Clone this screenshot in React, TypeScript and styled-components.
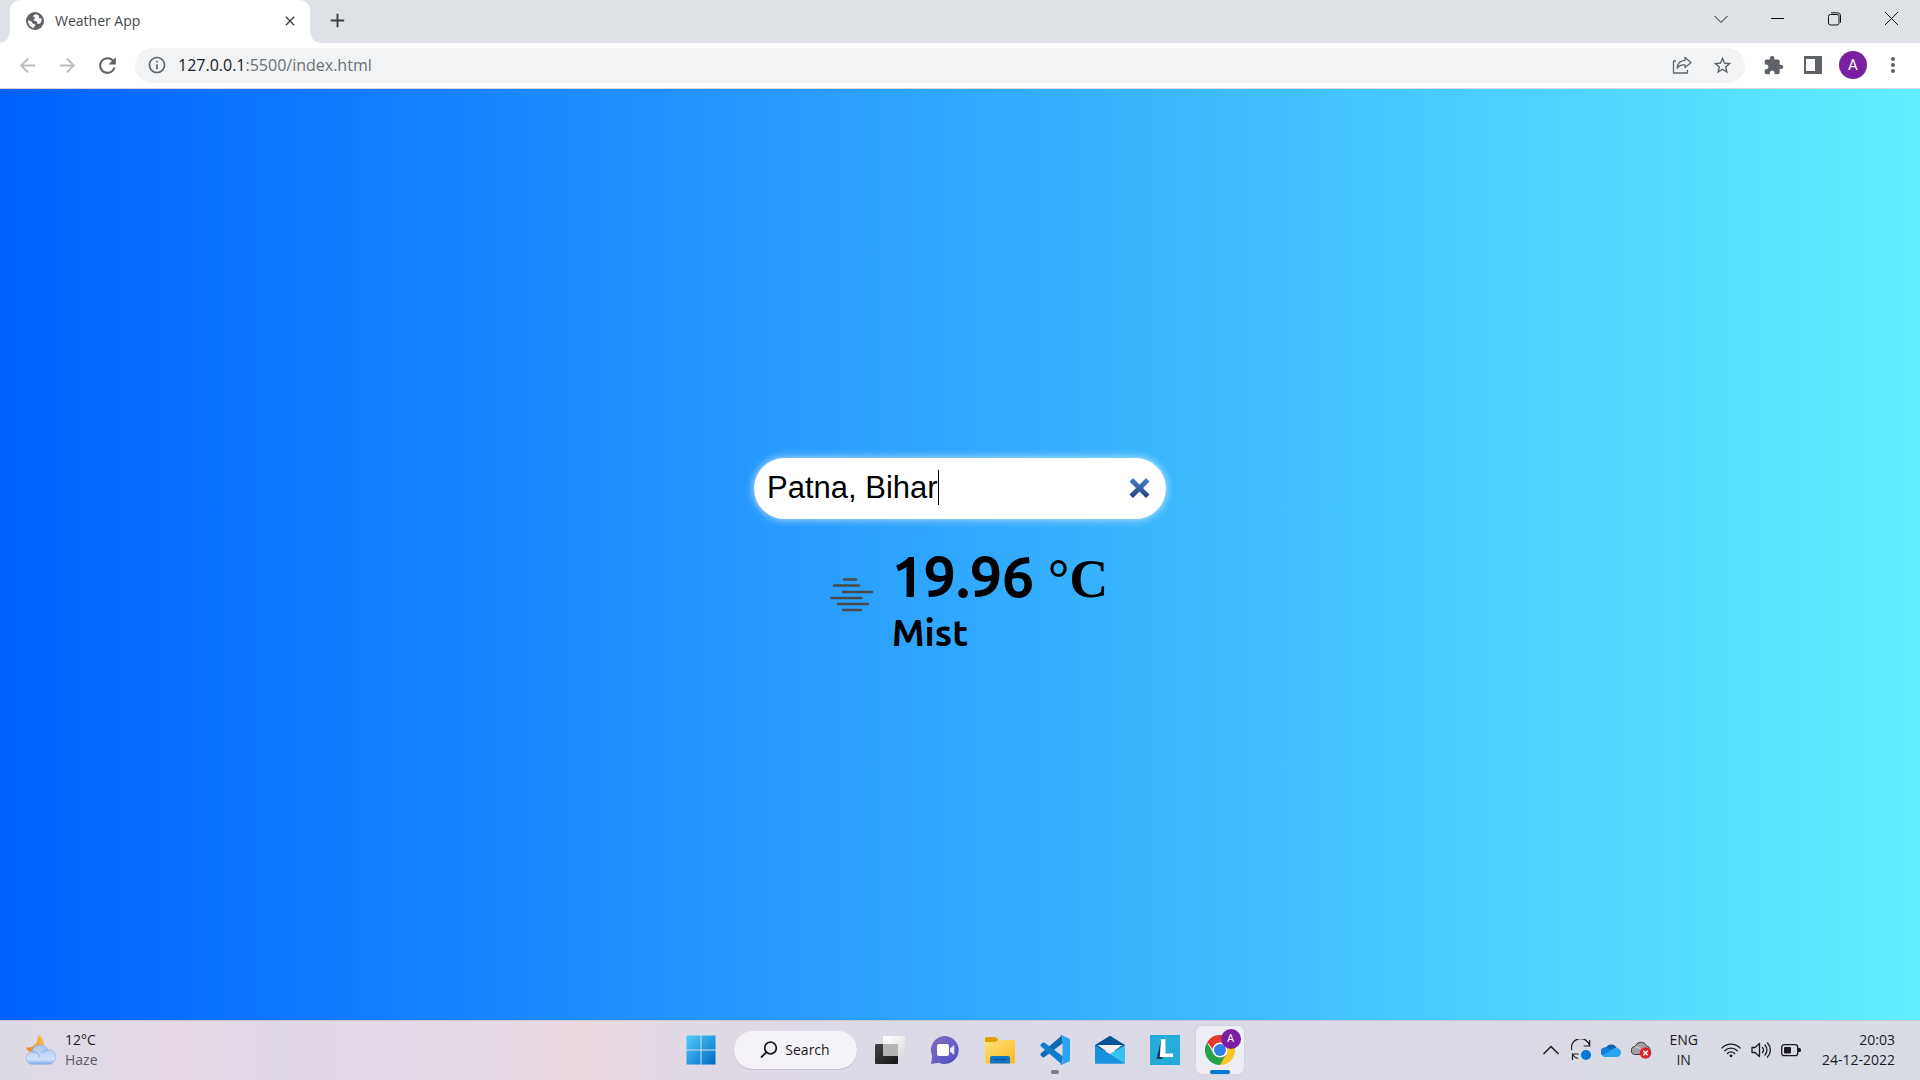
import React, { useState } from 'react';
import styled, { createGlobalStyle, css } from 'styled-components';
import {
  MdArrowBack,
  MdArrowForward,
  MdRefresh,
  MdInfoOutline,
  MdStarBorder,
  MdExtension,
  MdMoreVert,
  MdClose,
  MdAdd,
} from 'react-icons/md';

const UI_FONT = '"Segoe UI", "Open Sans", "Noto Sans", sans-serif';

const GlobalStyle = createGlobalStyle`
  *, *::before, *::after { box-sizing: border-box; }
  body { margin: 0; }
  button, input { font: inherit; color: inherit; }
  button { border: 0; padding: 0; background: none; cursor: pointer; }
  svg { display: block; flex: none; }
`;

const Screen = styled.div`
  min-height: 100vh;
  display: flex;
  flex-direction: column;
  font-family: ${UI_FONT};
  font-size: 14px;
  line-height: 20px;
  color: #1c1c1e;
`;

/* ---------- browser chrome ---------- */

const TabStrip = styled.div`
  display: flex;
  height: 43px;
  padding-left: 10px;
  background: #dee1e6;
`;

const Tab = styled.div`
  position: relative;
  display: flex;
  align-items: center;
  width: 300px;
  padding: 0 12px 2px 16px;
  border-radius: 10px 10px 0 0;
  background: #fff;
  color: #45474a;

  &::before,
  &::after {
    content: '';
    position: absolute;
    bottom: 0;
    width: 10px;
    height: 10px;
  }
  &::before {
    right: 100%;
    background: radial-gradient(circle at 0 0, transparent 9px, #fff 10px);
  }
  &::after {
    left: 100%;
    background: radial-gradient(circle at 100% 0, transparent 9px, #fff 10px);
  }
`;

const TabTitle = styled.span`
  flex: 1;
  margin-left: 11px;
`;

const IconButton = styled.button<{ $w?: number; $h?: number; $color?: string }>`
  display: flex;
  align-items: center;
  justify-content: center;
  flex: none;
  width: ${(p) => p.$w ?? 40}px;
  height: ${(p) => p.$h ?? 35}px;
  color: ${(p) => p.$color ?? '#5f6368'};
`;

const WindowControls = styled.div`
  display: flex;
  margin-left: auto;
`;

const Toolbar = styled.div`
  display: flex;
  align-items: center;
  height: 46px;
  padding: 0 7px 1px;
  border-bottom: 1px solid #d5d9dd;
  background: #fff;
`;

const AddressBar = styled.div`
  display: flex;
  align-items: center;
  flex: 1;
  height: 35px;
  margin: 0 8px;
  padding: 0 3px 0 12px;
  border-radius: 18px;
  background: #f1f3f4;
`;

const Url = styled.a`
  flex: 1;
  margin-left: 11px;
  font-size: 16px;
  line-height: 24px;
  color: #6b6f74;
  text-decoration: none;
`;

const Host = styled.span`
  color: #202124;
`;

const Avatar = styled.span`
  display: flex;
  align-items: center;
  justify-content: center;
  width: 28px;
  height: 28px;
  border-radius: 50%;
  background: #7b1fa2;
  color: #fff;
  font-family: Roboto, sans-serif;
  font-size: 15px;
`;

/* ---------- weather page ---------- */

const Page = styled.main`
  flex: 1;
  display: flex;
  flex-direction: column;
  align-items: center;
  justify-content: center;
  gap: 23px;
  padding-top: 1px;
  background: linear-gradient(90deg, #0061ff 0%, #60efff 100%);
  color: #000;
`;

const SearchField = styled.label`
  position: relative;
  display: flex;
  align-items: center;
  width: 412px;
  height: 61px;
  padding: 0 15px 0 13px;
  border-radius: 31px;
  background: #fff;
  box-shadow: 0 0 8px rgba(255, 255, 255, 0.75);
`;

const CityInput = styled.input`
  flex: 1;
  min-width: 0;
  padding: 0;
  border: 0;
  outline: 0;
  background: none;
  caret-color: transparent;
  font-family: Arial, "Liberation Sans", sans-serif;
  font-size: 31px;
  line-height: 36px;
`;

const Caret = styled.span`
  position: absolute;
  left: 184px;
  top: 12px;
  width: 1px;
  height: 35px;
  background: #000;
`;

const Result = styled.section`
  display: flex;
  align-items: center;
`;

const Condition = styled.div`
  display: flex;
  justify-content: center;
  width: 80px;
  padding-bottom: 4px;
`;

const Reading = styled.div`
  font-family: Ubuntu, "Noto Sans", sans-serif;
  font-weight: 700;
`;

const Temperature = styled.h1`
  margin: 0;
  font-size: 57px;
  line-height: 68px;
`;

const Unit = styled.span`
  font-family: "Liberation Serif", serif;
  font-size: 54px;
`;

const Description = styled.h2`
  margin: 0;
  font-size: 37px;
  line-height: 40px;
`;

/* ---------- taskbar ---------- */

const Taskbar = styled.footer`
  display: grid;
  grid-template-columns: 1fr auto 1fr;
  align-items: center;
  height: 60px;
  padding: 0 25px;
  box-shadow: inset 0 1px #c9c8d6;
  background: linear-gradient(
    90deg,
    #dcdbe6 0%,
    #e7d9e7 9%,
    #e1d8e7 14%,
    #e4d8e6 25%,
    #ebd8df 30%,
    #e0d9e6 36%,
    #dddae7 47%,
    #dadae6 62%,
    #d9dbe4 100%
  );
`;

const WeatherWidget = styled.button`
  display: flex;
  align-items: center;
  gap: 9px;
  text-align: left;
`;

const Lines = styled.span<{ $align?: string }>`
  display: flex;
  flex-direction: column;
  text-align: ${(p) => p.$align ?? 'left'};
`;

const Muted = styled.span`
  color: #5c5a62;
`;

const Apps = styled.nav`
  display: flex;
  align-items: center;
  gap: 7px;
`;

const AppButton = styled.button<{ $active?: boolean; $running?: boolean }>`
  position: relative;
  display: flex;
  align-items: center;
  justify-content: center;
  width: 48px;
  height: 48px;
  border-radius: 5px;
  ${(p) =>
    p.$active &&
    css`
      background: #eeedf3;
      box-shadow: 0 0 1px rgba(0, 0, 0, 0.25);
    `}
  ${(p) =>
    (p.$active || p.$running) &&
    css`
      &::after {
        content: '';
        position: absolute;
        bottom: 0;
        width: ${p.$active ? 20 : 8}px;
        height: 4px;
        border-radius: 2px;
        background: ${p.$active ? '#0078d4' : '#7d7c84'};
      }
    `}
`;

const SearchButton = styled.button`
  display: flex;
  align-items: center;
  justify-content: center;
  gap: 7px;
  width: 123px;
  height: 38px;
  margin: 0 2px;
  border-radius: 19px;
  background: #f4f2f7;
  box-shadow: 0 1px 1px rgba(0, 0, 0, 0.12);
`;

const ProfileBadge = styled.span`
  position: absolute;
  top: 3px;
  right: 3px;
  width: 20px;
  height: 20px;
  border-radius: 50%;
  background: #7b1fa2;
  color: #fff;
  font-family: Roboto, sans-serif;
  font-size: 11px;
  line-height: 20px;
  text-align: center;
`;

const Tray = styled.div`
  display: flex;
  align-items: center;
  justify-content: flex-end;
  gap: 17px;
`;

const TrayGroup = styled.div`
  display: flex;
  align-items: center;
  gap: 10px;
`;

const StatusGroup = styled(TrayGroup)`
  margin: 0 4px 0 6px;
`;

/* ---------- drawings ---------- */

const GlobeIcon = () => (
  <svg width="18" height="18" viewBox="0 0 18 18">
    <circle cx="9" cy="9" r="9" fill="#5f6368" />
    <path
      fill="#fff"
      d="M9.500 2.200c-1.400.5-2.300 1.200-2.200 2.300.1 1 1.500.7 1.700 1.600.2 1-1.600.8-1.400 2 .2 1.300 1.900.6 3 1.500.9.800.3 1.800 1.200 2.300.9.400 1.900-.2 2.700-1 1-1.200 1.500-3.200.8-5.100-.5.800-1.500.9-2.200.2-.8-.9.300-1.800-.5-2.600-.8-.8-2-.9-3.100-1.200z"
    />
    <path
      fill="#fff"
      d="M2 8.400c1.300.1 2.600.4 3.600 1.300.9.800.6 1.700 1.700 2.100 1 .4 1.900.3 2.100 1.200.2 1-1 1.200-1.300 2 -.1.400-.1.700 0 1C4.800 15.500 1.900 12.600 2 8.400z"
    />
  </svg>
);

const ShareIcon = () => (
  <svg width="20" height="20" viewBox="0 0 20 20" fill="none" stroke="#5f6368" strokeWidth="1.300" strokeLinejoin="round">
    <path d="M4 6H1.500v12h14v-3" />
    <path d="M13 2.500l6 5-6 5V9.800C9.500 9.600 7 10.500 5.200 13c.3-4.500 3-7.500 7.800-7.700z" />
  </svg>
);

const SidePanelIcon = () => (
  <svg width="18" height="18" viewBox="0 0 18 18">
    <path fill="#5f6368" fillRule="evenodd" d="M0 0h18v18H0zM2 3v12h9V3z" />
  </svg>
);

const MistIcon = () => (
  <svg width="44" height="34" viewBox="0 0 44 34" stroke="#4a4a4a" strokeWidth="2.600" strokeLinecap="round">
    <path d="M14 1.500h12M4 7.500h25M13 14h29M1.500 20h30M8 26h30M13 32h18" />
  </svg>
);

const ClearIcon = () => (
  <svg width="22" height="22" viewBox="0 0 22 22">
    <defs>
      <linearGradient id="clear" x1="0" y1="0" x2="0" y2="1">
        <stop offset="0" stopColor="#4a80cc" />
        <stop offset="1" stopColor="#243f78" />
      </linearGradient>
    </defs>
    <path
      fill="url(#clear)"
      d="M4 1L10.500 7.500 17 1 20.500 4.500 14 11 20.500 17.500 17 21 10.500 14.500 4 21 .5 17.500 7 11 .5 4.500z"
    />
  </svg>
);

const NightCloudIcon = () => (
  <svg width="31" height="30" viewBox="0 0 31 30">
    <defs>
      <linearGradient id="moon" x1="0" y1="1" x2="1" y2="0">
        <stop offset="0" stopColor="#ee7b1c" />
        <stop offset="1" stopColor="#f7c948" />
      </linearGradient>
      <linearGradient id="cloud" x1="0" y1="0" x2="0" y2="1">
        <stop offset="0" stopColor="#a9c5f1" />
        <stop offset=".75" stopColor="#cfe0f9" />
        <stop offset="1" stopColor="#7fa6e8" />
      </linearGradient>
    </defs>
    <path fill="url(#moon)" d="M12.500 0c5 2 7.500 6.500 6 11.500C16.500 16.500 9.500 19 4.500 16.500 2.500 15.500 1.500 14 1 12.500 8.500 13.500 14 8 12.500 0z" />
    <path
      fill="url(#cloud)"
      stroke="#8fb0ea"
      strokeWidth=".6"
      d="M7.500 29.300a6.300 6.300 0 0 1-.5-12.600 8.500 8.500 0 0 1 16-2 7.300 7.300 0 0 1 1 14.600z"
    />
    <path fill="none" stroke="#7fa4e6" d="M7 16.700c4-.5 7 2 7.500 5M23 15c-3 0-5 1-6 3" />
  </svg>
);

const WindowsIcon = () => (
  <svg width="30" height="30" viewBox="0 0 30 30">
    <defs>
      <linearGradient id="win" x1="0" y1="0" x2="1" y2="1">
        <stop offset="0" stopColor="#4fd0fb" />
        <stop offset="1" stopColor="#0067c5" />
      </linearGradient>
    </defs>
    <path fill="url(#win)" d="M.5.500h14v14H.5zM15.500.500h14v14h-14zM.5 15.500h14v14H.5zM15.500 15.500h14v14h-14z" />
  </svg>
);

const MagnifierIcon = () => (
  <svg width="18" height="18" viewBox="0 0 18 18" fill="none" stroke="#1c1c1e" strokeWidth="1.800" strokeLinecap="round">
    <circle cx="10.500" cy="7" r="5.800" />
    <path d="M6.300 11.300L1.500 16" />
  </svg>
);

const TaskViewIcon = () => (
  <svg width="30" height="28" viewBox="0 0 30 28">
    <defs>
      <linearGradient id="dark" x1="0" y1="0" x2="1" y2="1">
        <stop offset="0" stopColor="#454545" />
        <stop offset="1" stopColor="#151515" />
      </linearGradient>
      <linearGradient id="light" x1="0" y1="0" x2="1" y2="1">
        <stop offset="0" stopColor="#ffffff" />
        <stop offset="1" stopColor="#dcdcdc" />
      </linearGradient>
    </defs>
    <rect y="8" width="23" height="20" rx="1" fill="url(#dark)" />
    <rect x="8" width="22" height="20" rx="1" fill="url(#light)" />
    <rect x="8" y="8" width="15" height="12" fill="#b4b4b4" />
  </svg>
);

const ChatIcon = () => (
  <svg width="30" height="30" viewBox="0 0 30 30">
    <defs>
      <linearGradient id="chat" x1="0" y1="0" x2="1" y2="1">
        <stop offset="0" stopColor="#8a6bb5" />
        <stop offset=".5" stopColor="#6a5fc4" />
        <stop offset="1" stopColor="#4a4fc4" />
      </linearGradient>
    </defs>
    <path fill="url(#chat)" d="M15 1a14 14 0 1 1-6 26.800L1 29l1.200-8A14 14 0 0 1 15 1z" />
    <rect x="7" y="9" width="12" height="12" rx="2" fill="#fff" />
    <path fill="#e8e6fa" d="M20 13.500l3.500-3a.5.500 0 0 1 .8.400v8.200a.5.500 0 0 1-.8.400l-3.500-3z" />
  </svg>
);

const FolderIcon = () => (
  <svg width="30" height="28" viewBox="0 0 30 28">
    <defs>
      <linearGradient id="folder" x1="0" y1="0" x2="1" y2="1">
        <stop offset="0" stopColor="#ffe07a" />
        <stop offset="1" stopColor="#f9b91f" />
      </linearGradient>
    </defs>
    <path fill="#e0a000" d="M1.500 1h9l3 3H29a1 1 0 0 1 1 1v5H0V2.500A1.500 1.500 0 0 1 1.500 1z" />
    <path fill="url(#folder)" d="M0 6h10l3-2h16a1 1 0 0 1 1 1v21.500a1 1 0 0 1-1 1H1a1 1 0 0 1-1-1z" />
    <path fill="#1474c4" d="M7 20h16a2 2 0 0 1 2 2v5.500H5V22a2 2 0 0 1 2-2z" />
    <path stroke="#0b4f92" strokeWidth="1.300" d="M8.500 23.500h13" />
  </svg>
);

const CodeIcon = () => (
  <svg width="30" height="30" viewBox="0 0 30 30">
    <path fill="#0a6ab6" d="M21.800.500L23 8 4.500 22 3 22.500.500 20.300v-1.500z" />
    <path fill="#0f7fcb" d="M.5 9.500L3 7.500l1.700.3L23 21.500l-1.200 8L.500 11z" />
    <path fill="#2aa3f0" d="M22 .2l7 3.200a1.800 1.800 0 0 1 1 1.600v20a1.800 1.800 0 0 1-1 1.600l-7 3.200c-.8.300-1.500.1-2-.5l2.500-1V1.700L20 .700c.5-.6 1.200-.8 2-.5z" />
  </svg>
);

const MailIcon = () => (
  <svg width="30" height="28" viewBox="0 0 30 28">
    <path fill="#0a5296" d="M0 9L13.800.400a2 2 0 0 1 2.400 0L30 9v6H0z" />
    <path fill="#f1f0f3" d="M2.500 9h25L15 18z" />
    <path fill="#1a8fdc" d="M0 9l30 18.500H0z" />
    <path fill="#35c2f2" d="M30 9v18.500h-1L15 18z" />
    <path fill="#1b93df" d="M15 18l14.500 9.500H0z" />
  </svg>
);

const LetterAppIcon = () => (
  <svg width="30" height="30" viewBox="0 0 30 30">
    <path fill="#26acd9" d="M0 0h30v30H0z" />
    <path fill="#0c3c6e" d="M11 5L6.500 24H12l1-3z" />
    <path fill="#fff" d="M11 4h4.500v14.500H23V22H9.800z" />
  </svg>
);

const ChromeIcon = () => (
  <svg width="30" height="30" viewBox="0 0 30 30">
    <path fill="#e33b2e" d="M15 15L2 7.500a15 15 0 0 1 26 0z" />
    <path fill="#fcc31e" d="M15 15V7.500h13A15 15 0 0 1 15 30l6.500-11z" />
    <path fill="#26a148" d="M21.500 18.800L15 30A15 15 0 0 1 2 7.500L8.500 18.800 15 22z" />
    <path fill="#e33b2e" d="M2.500 7L9 16l6-8.500z" />
    <path fill="#26a148" d="M2 7.500L8.500 18.800 8 26 0 15z" clipPath="circle(15px at 15px 15px)" />
    <circle cx="15" cy="15" r="7.500" fill="#fff" />
    <circle cx="15" cy="15" r="6" fill="#2f7de9" />
  </svg>
);

const ChevronIcon = () => (
  <svg width="16" height="10" viewBox="0 0 16 10" fill="none" stroke="#1c1c1e">
    <path d="M1.500 2L8 8.500 14.500 2" />
  </svg>
);

const ShowHiddenIcon = () => (
  <svg width="18" height="10" viewBox="0 0 18 10" fill="none" stroke="#1c1c1e" strokeWidth="1.500">
    <path d="M.5 9L8 1.500 15.500 9" />
  </svg>
);

const SyncIcon = () => (
  <svg width="20" height="22" viewBox="0 0 20 22" fill="none" stroke="#1c1c1e" strokeWidth="1.200">
    <path d="M.7 11A9 9 0 0 1 18.500 6.500M18.700 1v6h-6M7 19.500A9 9 0 0 1 2 16M1.500 21v-6h6" />
    <circle cx="15" cy="16" r="5" fill="#0078d4" stroke="none" />
  </svg>
);

const OneDriveIcon = () => (
  <svg width="20" height="14" viewBox="0 0 20 14">
    <path fill="#0a62b8" d="M5 4.500A6 6 0 0 1 15.700 5l-5 4.500L1.500 12A4.300 4.300 0 0 1 5 4.500z" />
    <path fill="#1480d8" d="M5 4.500c2 0 3.500.8 5.500 2.200L3 13.300A4.400 4.400 0 0 1 5 4.500z" />
    <path fill="#2aa4ee" d="M10 7a6 6 0 0 1 5.500-2A4.500 4.500 0 0 1 15.500 14h-11c-1.200 0-2.200-.5-3-1.300z" />
  </svg>
);

const CloudErrorIcon = () => (
  <svg width="21" height="18" viewBox="0 0 21 18">
    <path fill="#a3a3a6" stroke="#3a3a3c" d="M4.500 13.500a4 4 0 0 1-.3-8 6 6 0 0 1 11.300-.5c2 .3 3.500 2 3.500 4.200s-1.800 4.300-4 4.300z" />
    <path fill="none" stroke="#dcdce0" d="M4 6c3 0 4.500 1 7 3" />
    <circle cx="14.500" cy="12" r="5.800" fill="#d9232e" />
    <path stroke="#fff" strokeWidth="1.600" d="M12.300 9.800l4.400 4.400M16.700 9.800l-4.400 4.400" />
  </svg>
);

const WifiIcon = () => (
  <svg width="20" height="16" viewBox="0 0 20 16" fill="none" stroke="#1c1c1e" strokeWidth="1.300" strokeLinecap="round">
    <path d="M1 6a12.500 12.500 0 0 1 18 0M3.700 8.800a8.800 8.800 0 0 1 12.600 0M6.400 11.500a5 5 0 0 1 7.200 0" />
    <circle cx="10" cy="13.800" r="1.400" fill="#1c1c1e" stroke="none" />
  </svg>
);

const SpeakerIcon = () => (
  <svg width="20" height="18" viewBox="0 0 20 18" fill="none" stroke="#1c1c1e" strokeWidth="1.300" strokeLinecap="round" strokeLinejoin="round">
    <path d="M1 6.500h3L8.500 2.500v13L4 11.500H1z" />
    <path d="M11.500 6.500a4 4 0 0 1 0 5M14 4a7.500 7.500 0 0 1 0 10M16.500 2a10 10 0 0 1 0 14" />
  </svg>
);

const BatteryIcon = () => (
  <svg width="20" height="14" viewBox="0 0 20 14">
    <rect x=".7" y="1.700" width="16" height="11" rx="2.500" fill="none" stroke="#1c1c1e" strokeWidth="1.300" />
    <rect x="3" y="4" width="7" height="6.500" rx="1" fill="#1c1c1e" />
    <path fill="#1c1c1e" d="M17 5h1.500a1.500 1.500 0 0 1 1.500 1.500v1A1.500 1.500 0 0 1 18.500 9H17z" />
  </svg>
);

const MinimizeIcon = () => (
  <svg width="13" height="13" viewBox="0 0 13 13" stroke="#111">
    <path d="M0 6.500h13" />
  </svg>
);

const RestoreIcon = () => (
  <svg width="14" height="14" viewBox="0 0 14 14" fill="none" stroke="#111">
    <rect x=".5" y="2.500" width="10.500" height="10.500" rx="2" />
    <path d="M3 .8h6.500a3 3 0 0 1 3 3v7" />
  </svg>
);

const CloseIcon = () => (
  <svg width="13" height="13" viewBox="0 0 13 13" stroke="#111">
    <path d="M0 0l13 13M13 0L0 13" />
  </svg>
);

/* ---------- sections ---------- */

const BrowserChrome = () => (
  <header>
    <TabStrip>
      <Tab>
        <GlobeIcon />
        <TabTitle>Weather App</TabTitle>
        <IconButton $w={16} $h={16} $color="#3c4043" aria-label="Close tab">
          <MdClose size={16} />
        </IconButton>
      </Tab>
      <IconButton $w={54} $h={41} $color="#3c4043" aria-label="New tab">
        <MdAdd size={23} />
      </IconButton>
      <WindowControls>
        <IconButton $w={57} $h={37} aria-label="Search tabs"><ChevronIcon /></IconButton>
        <IconButton $w={57} $h={37} aria-label="Minimize"><MinimizeIcon /></IconButton>
        <IconButton $w={57} $h={37} aria-label="Restore"><RestoreIcon /></IconButton>
        <IconButton $w={57} $h={37} aria-label="Close"><CloseIcon /></IconButton>
      </WindowControls>
    </TabStrip>
    <Toolbar>
      <IconButton $color="#babcbe" aria-label="Back"><MdArrowBack size={23} /></IconButton>
      <IconButton $color="#babcbe" aria-label="Forward"><MdArrowForward size={23} /></IconButton>
      <IconButton aria-label="Reload"><MdRefresh size={25} /></IconButton>
      <AddressBar>
        <MdInfoOutline size={20} color="#5f6368" aria-hidden />
        <Url href="#"><Host>127.0.0.1</Host>:5500/index.html</Url>
        <IconButton aria-label="Share"><ShareIcon /></IconButton>
        <IconButton aria-label="Bookmark"><MdStarBorder size={21} /></IconButton>
      </AddressBar>
      <IconButton aria-label="Extensions"><MdExtension size={21} /></IconButton>
      <IconButton aria-label="Side panel"><SidePanelIcon /></IconButton>
      <IconButton aria-label="Profile"><Avatar>A</Avatar></IconButton>
      <IconButton aria-label="Menu"><MdMoreVert size={24} /></IconButton>
    </Toolbar>
  </header>
);

const WeatherPage = () => {
  const [city, setCity] = useState('Patna, Bihar');
  return (
    <Page>
      <SearchField>
        <CityInput aria-label="City" value={city} onChange={(e) => setCity(e.target.value)} />
        <Caret />
        <IconButton $w={22} $h={22} aria-label="Clear" onClick={() => setCity('')}>
          <ClearIcon />
        </IconButton>
      </SearchField>
      <Result>
        <Condition><MistIcon /></Condition>
        <Reading>
          <Temperature>19.96 <Unit>°C</Unit></Temperature>
          <Description>Mist</Description>
        </Reading>
      </Result>
    </Page>
  );
};

const DesktopBar = () => (
  <Taskbar>
    <WeatherWidget>
      <NightCloudIcon />
      <Lines>
        <span>12°C</span>
        <Muted>Haze</Muted>
      </Lines>
    </WeatherWidget>
    <Apps>
      <AppButton aria-label="Start"><WindowsIcon /></AppButton>
      <SearchButton><MagnifierIcon />Search</SearchButton>
      <AppButton aria-label="Task view"><TaskViewIcon /></AppButton>
      <AppButton aria-label="Chat"><ChatIcon /></AppButton>
      <AppButton aria-label="File Explorer"><FolderIcon /></AppButton>
      <AppButton $running aria-label="Visual Studio Code"><CodeIcon /></AppButton>
      <AppButton aria-label="Mail"><MailIcon /></AppButton>
      <AppButton aria-label="Lightshot"><LetterAppIcon /></AppButton>
      <AppButton $active aria-label="Chrome">
        <ChromeIcon />
        <ProfileBadge>A</ProfileBadge>
      </AppButton>
    </Apps>
    <Tray>
      <TrayGroup>
        <ShowHiddenIcon />
        <SyncIcon />
        <OneDriveIcon />
        <CloudErrorIcon />
      </TrayGroup>
      <Lines $align="center">
        <span>ENG</span>
        <span>IN</span>
      </Lines>
      <StatusGroup>
        <WifiIcon />
        <SpeakerIcon />
        <BatteryIcon />
      </StatusGroup>
      <Lines $align="right">
        <span>20:03</span>
        <span>24-12-2022</span>
      </Lines>
    </Tray>
  </Taskbar>
);

export default function App() {
  return (
    <Screen>
      <GlobalStyle />
      <BrowserChrome />
      <WeatherPage />
      <DesktopBar />
    </Screen>
  );
}
